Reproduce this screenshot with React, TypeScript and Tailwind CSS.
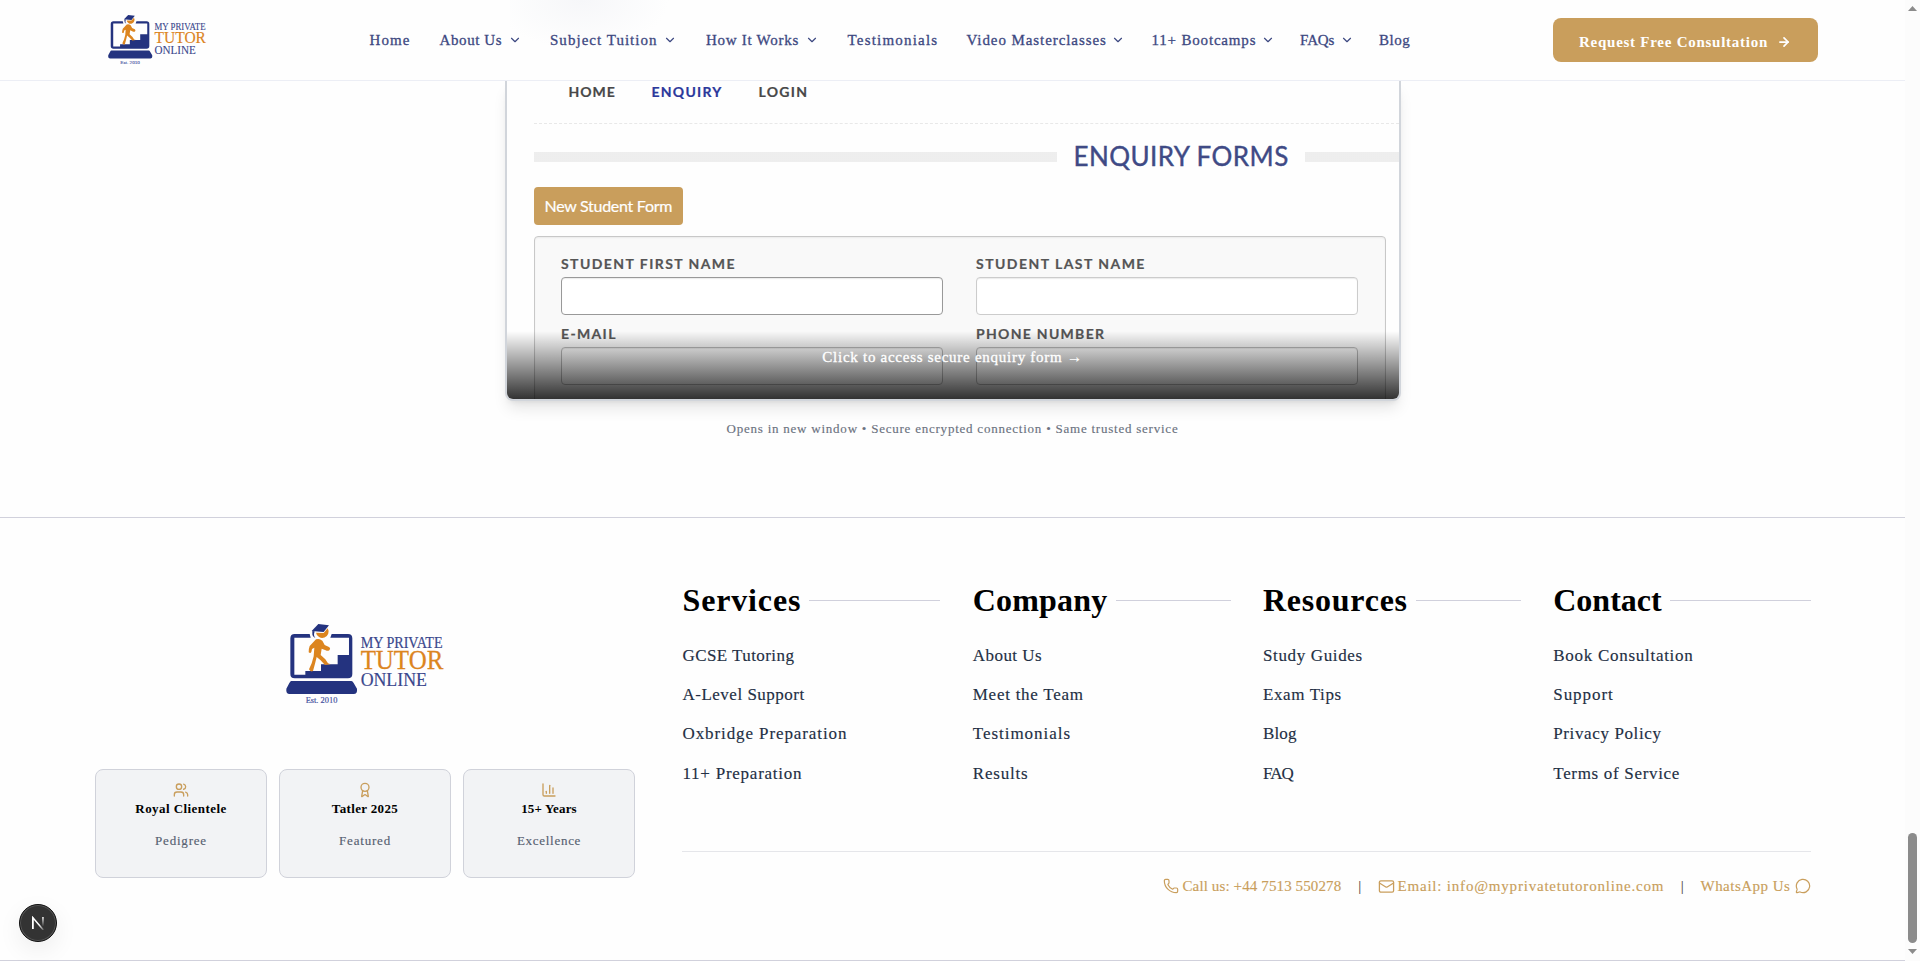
import React from "react";
import {
  ArrowRight,
  Award,
  ChartColumn,
  ChevronDown,
  Mail,
  MessageCircle,
  Phone,
  Users,
} from "lucide-react";

const navItems = [
  { label: "Home", menu: false, box: "w-[70px]", text: "tracking-[1.1px]" },
  { label: "About Us", menu: true, box: "w-[110.5px]", text: "w-[68.5px] tracking-[0.6px]" },
  { label: "Subject Tuition", menu: true, box: "w-[156px]", text: "w-[113px] tracking-[1.03px]" },
  { label: "How It Works", menu: true, box: "w-[141.5px]", text: "w-[99px] tracking-[0.72px]" },
  { label: "Testimonials", menu: false, box: "w-[119px]", text: "tracking-[1.2px]" },
  { label: "Video Masterclasses", menu: true, box: "w-[185px]", text: "w-[145.5px] tracking-[0.92px]" },
  { label: "11+ Bootcamps", menu: true, box: "w-[148.5px]", text: "w-[109.5px] tracking-[0.82px]" },
  { label: "FAQs", menu: true, box: "w-[79px]", text: "w-[40px] tracking-[-0.1px]" },
  { label: "Blog", menu: false, box: "w-[40px]", text: "tracking-[0.5px]" },
];

const footerColumns = [
  {
    title: "Services",
    tracking: "tracking-[0.85px]",
    links: [
      ["GCSE Tutoring", "tracking-[0.43px]"],
      ["A-Level Support", "tracking-[0.5px]"],
      ["Oxbridge Preparation", "tracking-[0.9px]"],
      ["11+ Preparation", "tracking-[0.75px]"],
    ],
  },
  {
    title: "Company",
    tracking: "tracking-[0.2px]",
    links: [
      ["About Us", "tracking-[0.45px]"],
      ["Meet the Team", "tracking-[0.74px]"],
      ["Testimonials", "tracking-[0.97px]"],
      ["Results", "tracking-[0.8px]"],
    ],
  },
  {
    title: "Resources",
    tracking: "tracking-[0.75px]",
    links: [
      ["Study Guides", "tracking-[0.64px]"],
      ["Exam Tips", "tracking-[0.62px]"],
      ["Blog", "tracking-[0.15px]"],
      ["FAQ", "tracking-[-1px]"],
    ],
  },
  {
    title: "Contact",
    tracking: "tracking-normal",
    links: [
      ["Book Consultation", "tracking-[0.72px]"],
      ["Support", "tracking-[0.95px]"],
      ["Privacy Policy", "tracking-[0.62px]"],
      ["Terms of Service", "tracking-[0.68px]"],
    ],
  },
];

const badges = [
  { Icon: Users, title: "Royal Clientele", titleClass: "tracking-[0.43px]", note: "Pedigree", noteClass: "tracking-[0.8px]" },
  { Icon: Award, title: "Tatler 2025", titleClass: "tracking-[0.35px]", note: "Featured", noteClass: "tracking-[0.8px]" },
  { Icon: ChartColumn, title: "15+ Years", titleClass: "tracking-[0.15px]", note: "Excellence", noteClass: "tracking-[0.72px]" },
];

function Logo({ className }: { className: string }) {
  return (
    <svg viewBox="47 42 472 241" className={`overflow-visible ${className}`} aria-label="My Private Tutor Online">
      <g fill="#24337f">
        <path d="M118 72H73Q60 72 60 85V192Q60 205 73 205H233Q246 205 246 192V85Q246 72 233 72H184L180 83H236V135H202V163H152V183H105V194H72V83H121Z" />
        <path d="M63 213H243Q247 213 250 219L260 236Q262 252 250 252H58Q46 252 48 236L57 219Q60 213 63 213Z" />
        <path d="M124 63L144 42L176 46L160 66L133 64Z" />
        <path d="M126 63L133 64L131 72Q130 79 135 84Q125 80 126 70Z" />
      </g>
      <g fill="#dc851f">
        <path d="M172 55A19 19 0 1 1 137 68L160 69Z" />
        <path d="M137 88Q147 84 156 92L163 105L176 111Q182 115 177 121Q172 124 166 121L154 116L151 135L165 148L173 160L181 163L164 165L150 150L139 141L134 161L128 183Q120 187 116 178L124 160L130 139L132 113L125 117L123 126Q120 132 115 127Q114 119 118 108Z" />
      </g>
      <g fontFamily="'Liberation Serif', serif">
        <text x="271" y="113" fontSize="47" textLength="246" lengthAdjust="spacingAndGlyphs" fill="#3a478d" stroke="#3a478d" strokeWidth="0.6">MY PRIVATE</text>
        <text x="271" y="178" fontSize="83" textLength="248" lengthAdjust="spacingAndGlyphs" fill="#dc851f" stroke="#dc851f" strokeWidth="0.8">TUTOR</text>
        <text x="271" y="228" fontSize="58" textLength="199" lengthAdjust="spacingAndGlyphs" fill="#3a478d" stroke="#3a478d" strokeWidth="0.6">ONLINE</text>
        <text x="106" y="280" fontSize="24" textLength="95" lengthAdjust="spacingAndGlyphs" fill="#4450a0" stroke="#4450a0" strokeWidth="0.5">Est. 2010</text>
      </g>
    </svg>
  );
}

function Header() {
  return (
    <header className="relative z-10 flex h-[81px] items-center border-b border-[#eceef5] bg-[#fefefe]">
      <div className="pointer-events-none absolute top-0 left-[510px] h-[50px] w-[160px] bg-[radial-gradient(ellipse_at_45%_0%,#f6f7f9_0%,#fefefe_70%)]" />
      <Logo className="ml-[108px] h-[50px] w-[98px]" />
      <nav className="relative ml-[163.5px] flex items-center text-[15px] leading-[80px] whitespace-nowrap text-[#3d4881] [-webkit-text-stroke:0.3px_#3d4881]">
        {navItems.map((item) => (
          <a key={item.label} className={`flex items-center ${item.box}`}>
            <span className={item.text}>{item.label}</span>
            {item.menu && (
              <ChevronDown
                size={14}
                strokeWidth={2}
                className={item.label === "Video Masterclasses" ? "-ml-px" : ""}
              />
            )}
          </a>
        ))}
      </nav>
      <button className="ml-auto mr-[87px] flex h-11 w-[265px] items-center rounded-lg bg-[#c99e5c] pl-[26px] text-[15px] font-bold whitespace-nowrap text-white">
        <span className="w-[198px] pt-1 text-left tracking-[0.74px]">Request Free Consultation</span>
        <ArrowRight size={14} strokeWidth={3} className="mt-[3px]" />
      </button>
    </header>
  );
}

function Field({ label, tracking, border }: { label: string; tracking: string; border: string }) {
  return (
    <div>
      <div className={`mb-[3px] h-5 text-[14px] leading-5 font-bold whitespace-nowrap text-[#555] [-webkit-text-stroke:0.2px_#555] ${tracking}`}>
        {label}
      </div>
      <div className={`h-[38px] rounded-[4px] border bg-white shadow-[inset_0_1px_1px_rgba(0,0,0,0.08)] ${border}`} />
    </div>
  );
}

function EnquiryCard() {
  const dots =
    "h-[10px] bg-[#f7f7f7] bg-[radial-gradient(#e4e4e4_0.5px,transparent_0.9px)] bg-[size:2px_2px]";
  return (
    <div className="relative mx-auto h-80 w-[896px] rounded-b-lg border-x-2 border-b-2 border-[#d1d5db] bg-[#fefefe] shadow-[0_10px_15px_-3px_rgba(0,0,0,0.1),0_4px_6px_-4px_rgba(0,0,0,0.1)]">
      <div className="h-full overflow-hidden rounded-b-md pl-[27px] font-['Lato',sans-serif]">
        <div className="flex h-[43px] border-b border-dashed border-[#e8e8e8] pt-px pl-[35px] text-[14px] leading-5 font-bold text-[#484848]">
          <span className="w-[83px] tracking-[1px] [-webkit-text-stroke:0.2px_#484848]">HOME</span>
          <span className="w-[107px] tracking-[1.25px] text-[#2b389b] [-webkit-text-stroke:0.2px_#2b389b]">ENQUIRY</span>
          <span className="tracking-[1.3px] [-webkit-text-stroke:0.2px_#484848]">LOGIN</span>
        </div>
        <div className="flex h-[63px] pt-7">
          <div className={`w-[523px] ${dots}`} />
          <h2 className="-mt-px w-[248.5px] pl-[17px] text-[26px] leading-[10px] whitespace-nowrap text-[#3f4a85] tracking-[0.45px] [-webkit-text-stroke:0.4px_#3f4a85]">
            ENQUIRY FORMS
          </h2>
          <div className={`flex-1 ${dots}`} />
        </div>
        <div className="h-[38px] w-[149.5px] rounded-[4px] bg-[#c99e5c] pl-[11px] text-[16px] leading-[38px] tracking-[-0.28px] whitespace-nowrap text-white [-webkit-text-stroke:0.2px_white]">
          New Student Form
        </div>
        <div className="mt-[11px] grid h-[200px] w-[852px] grid-cols-[382px_382px] content-start gap-x-[33px] gap-y-[9px] rounded-[4px] border border-[#c8c8c8] bg-[#f9f9f9] px-[26.5px] pt-[17px] shadow-[inset_0_1px_2px_rgba(0,0,0,0.06)]">
          <Field label="STUDENT FIRST NAME" tracking="tracking-[1.43px]" border="border-[#999]" />
          <Field label="STUDENT LAST NAME" tracking="tracking-[1.45px]" border="border-[#ccc]" />
          <Field label="E-MAIL" tracking="tracking-[1.35px]" border="border-[#bbb]" />
          <Field label="PHONE NUMBER" tracking="tracking-[1.3px]" border="border-[#bbb]" />
        </div>
      </div>
      <div className="absolute inset-x-0 bottom-0 h-[68px] rounded-b-md bg-gradient-to-t from-black/80 to-transparent pt-4 text-center text-[15px] leading-5 tracking-[0.73px] text-white [-webkit-text-stroke:0.3px_white]">
        Click to access secure enquiry form →
      </div>
    </div>
  );
}

function Footer() {
  return (
    <footer className="flex h-[444px] border-y border-[#d1d1dc] pl-[95px]">
      <div className="w-[540px] pt-[106px]">
        <Logo className="ml-[190.5px] h-[80.3px] w-[157.3px]" />
        <div className="mt-[65px] grid grid-cols-3 gap-3">
          {badges.map(({ Icon, title, titleClass, note, noteClass }) => (
            <div
              key={title}
              className="flex h-[109px] flex-col items-center rounded-lg border border-[#d0d2da] bg-[#f2f3f5] pt-3 text-[13px] leading-5"
            >
              <Icon size={16} className="text-[#c99e5c]" />
              <div className={`mt-px font-bold text-black ${titleClass}`}>{title}</div>
              <div className={`mt-3 text-[#566070] [-webkit-text-stroke:0.15px_#566070] ${noteClass}`}>{note}</div>
            </div>
          ))}
        </div>
      </div>
      <div className="ml-[47px] w-[1129px] pt-[62px]">
        <div className="grid grid-cols-4 gap-8">
          {footerColumns.map((column) => (
            <div key={column.title}>
              <div className="flex items-center gap-2">
                <h3 className={`pl-[0.5px] text-[32px] leading-10 font-bold text-black ${column.tracking}`}>{column.title}</h3>
                <div className="h-px flex-1 bg-[#d0d0dc]" />
              </div>
              <ul className="mt-4 mb-[0.5px] pl-[0.5px] text-[17px] leading-[39.2px] whitespace-nowrap text-[#232f44] [-webkit-text-stroke:0.15px_#232f44]">
                {column.links.map(([label, tracking]) => (
                  <li key={label} className={tracking}>
                    {label}
                  </li>
                ))}
              </ul>
            </div>
          ))}
        </div>
        <div className="mt-[58px] flex items-center justify-end border-t border-[#e5e6ea] pt-6 text-[15px] leading-5 whitespace-nowrap text-[#c99e5c] [-webkit-text-stroke:0.15px_#c99e5c]">
          <Phone size={16} strokeWidth={1.8} />
          <span className="ml-[3.5px] w-[159.5px] tracking-[0.12px]">Call us: +44 7513 550278</span>
          <span className="w-[35.5px] text-center text-[#232f44]">|</span>
          <Mail size={17} strokeWidth={1.8} />
          <span className="ml-[3px] w-[266.5px] tracking-[0.8px]">Email: info@myprivatetutoronline.com</span>
          <span className="w-[36.5px] text-center text-[#232f44]">|</span>
          <span className="w-[90.5px] tracking-[0.48px]">WhatsApp Us</span>
          <MessageCircle size={16} strokeWidth={1.8} className="ml-1" />
        </div>
      </div>
    </footer>
  );
}

function Scrollbar() {
  return (
    <div className="flex w-[15px] flex-col items-center bg-[#fcfcfc] pt-[6px]">
      <svg width="9" height="5" viewBox="0 0 9 5" fill="#8b8b8b">
        <path d="M4.5 0L9 5H0Z" />
      </svg>
      <div className="mt-[822px] h-[110px] w-[9px] rounded-full bg-[#8b8b8b]" />
      <svg width="9" height="5" viewBox="0 0 9 5" fill="#8b8b8b" className="mt-[6px]">
        <path d="M4.5 5L9 0H0Z" />
      </svg>
    </div>
  );
}

function DevBadge() {
  return (
    <div className="absolute top-[904px] left-[19px] flex size-[38px] items-center justify-center rounded-full border border-[#111] bg-[#333] shadow-[inset_0_0_0_1px_#555,0_8px_24px_rgba(0,0,0,0.07)]">
      <svg width="14" height="14" viewBox="0 0 14 14" fill="none">
        <defs>
          <linearGradient id="stem" x1="0" y1="0" x2="0" y2="1">
            <stop offset="0" stopColor="#fff" />
            <stop offset="1" stopColor="#fff" stopOpacity="0" />
          </linearGradient>
          <linearGradient id="slash" x1="0" y1="0" x2="1" y2="1">
            <stop offset="0.6" stopColor="#fff" />
            <stop offset="1" stopColor="#fff" stopOpacity="0.2" />
          </linearGradient>
        </defs>
        <path d="M1.8 13V1.6L12.4 14" stroke="url(#slash)" strokeWidth="1.5" />
        <path d="M1.8 13V1.6" stroke="#fff" strokeWidth="1.5" />
        <rect x="11.2" y="1" width="1.5" height="9.5" fill="url(#stem)" />
      </svg>
    </div>
  );
}

export default function App() {
  return (
    <div className="relative flex h-[961px] w-[1920px] overflow-hidden bg-[#fefefe] font-['Liberation_Serif',serif]">
      <div className="flex w-[1905px] flex-col">
        <Header />
        <section className="h-[436px]">
          <EnquiryCard />
          <p className="mt-[18px] text-center text-[13px] leading-5 tracking-[0.77px] text-[#6b7280] [-webkit-text-stroke:0.15px_#6b7280]">
            Opens in new window • Secure encrypted connection • Same trusted service
          </p>
        </section>
        <Footer />
      </div>
      <Scrollbar />
      <DevBadge />
    </div>
  );
}
